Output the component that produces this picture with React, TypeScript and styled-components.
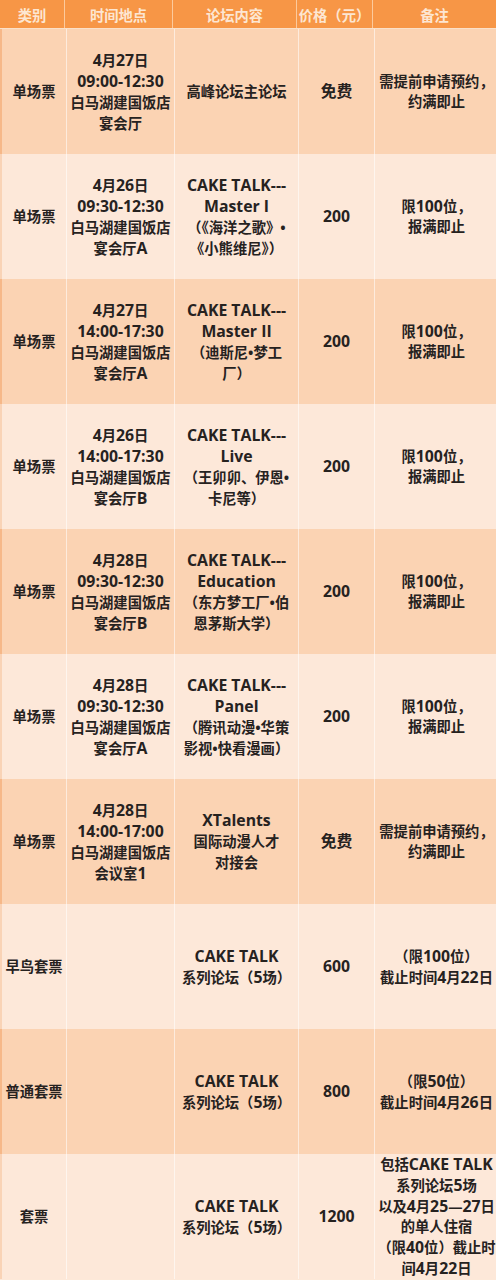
import React from "react";
import styled, { createGlobalStyle } from "styled-components";

interface Ticket {
    kind: string
    when: string[]
    topic: string[]
    price: string
    note: string[]
}

const tickets: Ticket[] = [
    { kind: "单场票", when: ["4月27日", "09:00-12:30", "白马湖建国饭店", "宴会厅"], topic: ["高峰论坛主论坛"], price: "免费", note: ["需提前申请预约，", "约满即止"] },
    { kind: "单场票", when: ["4月26日", "09:30-12:30", "白马湖建国饭店", "宴会厅A"], topic: ["CAKE TALK---", "Master I", "（《海洋之歌》•", "《小熊维尼》）"], price: "200", note: ["限100位，", "报满即止"] },
    { kind: "单场票", when: ["4月27日", "14:00-17:30", "白马湖建国饭店", "宴会厅A"], topic: ["CAKE TALK---", "Master II", "（迪斯尼•梦工", "厂）"], price: "200", note: ["限100位，", "报满即止"] },
    { kind: "单场票", when: ["4月26日", "14:00-17:30", "白马湖建国饭店", "宴会厅B"], topic: ["CAKE TALK---", "Live", "（王卯卯、伊恩•", "卡尼等）"], price: "200", note: ["限100位，", "报满即止"] },
    { kind: "单场票", when: ["4月28日", "09:30-12:30", "白马湖建国饭店", "宴会厅B"], topic: ["CAKE TALK---", "Education", "（东方梦工厂•伯", "恩茅斯大学）"], price: "200", note: ["限100位，", "报满即止"] },
    { kind: "单场票", when: ["4月28日", "09:30-12:30", "白马湖建国饭店", "宴会厅A"], topic: ["CAKE TALK---", "Panel", "（腾讯动漫•华策", "影视•快看漫画）"], price: "200", note: ["限100位，", "报满即止"] },
    { kind: "单场票", when: ["4月28日", "14:00-17:00", "白马湖建国饭店", "会议室1"], topic: ["XTalents", "国际动漫人才", "对接会"], price: "免费", note: ["需提前申请预约，", "约满即止"] },
    { kind: "早鸟套票", when: [], topic: ["CAKE TALK", "系列论坛（5场）"], price: "600", note: ["（限100位）", "截止时间4月22日"] },
    { kind: "普通套票", when: [], topic: ["CAKE TALK", "系列论坛（5场）"], price: "800", note: ["（限50位）", "截止时间4月26日"] },
    { kind: "套票", when: [], topic: ["CAKE TALK", "系列论坛（5场）"], price: "1200", note: ["包括CAKE TALK", "系列论坛5场", "以及4月25—27日", "的单人住宿", "（限40位）截止时", "间4月22日"] },
]

const headers = ["类别", "时间地点", "论坛内容", "价格（元）", "备注"]

// latin runs sit a little larger than the chinese glyphs in the original
const Mixed = ({ text }: { text: string }) => (
    <>
        {text.split(/([\x20-\x7E]+)/).filter(Boolean).map((part, i) =>
            /^[\x20-\x7E]+$/.test(part) ? <Latin key={i}>{part}</Latin> : <React.Fragment key={i}>{part}</React.Fragment>
        )}
    </>
)

const Lines = ({ lines }: { lines: string[] }) => (
    <>
        {lines.map((l, i) => <Line key={i}><Mixed text={l} /></Line>)}
    </>
)

const App = () => {
    return (
        <>
        <GlobalStyle />
        <Table>
            <HeaderRow>
                {headers.map(h => <HeaderCell key={h}>{h}</HeaderCell>)}
            </HeaderRow>
            {tickets.map((t, i) => (
                <Row key={i} dark={i % 2 === 0}>
                    <Cell>{t.kind}</Cell>
                    <Cell><Lines lines={t.when} /></Cell>
                    <Cell><Lines lines={t.topic} /></Cell>
                    <Cell><Latin>{t.price}</Latin></Cell>
                    <Cell tight><Lines lines={t.note} /></Cell>
                </Row>
            ))}
        </Table>
        </>
    )
}

const GlobalStyle = createGlobalStyle`
    body {
        margin: 0;
        background: #fde9d9;
        font-family: "Open Sans", "Noto Sans CJK SC", sans-serif;
    }
`

const Table = styled.div`
    display: flex;
    flex-direction: column;
    width: 496px;
`

const columns = "65px 108px 124px 76px 123px"

const HeaderRow = styled.div`
    display: grid;
    grid-template-columns: ${columns};
    height: 29px;
    background-color: #f79646;
    border-bottom: 1px solid #fbe0c8;
    box-sizing: border-box;
`

const HeaderCell = styled.div`
    display: flex;
    align-items: center;
    justify-content: center;
    color: #fde6d2;
    font-size: 14.3px;
    font-weight: 700;
    white-space: nowrap;
    border-right: 1px solid rgba(255, 236, 215, 0.6);
    &:last-child {
        border-right: none;
    }
`

const Row = styled.div<{ dark: boolean }>`
    display: grid;
    grid-template-columns: ${columns};
    height: 125px;
    background-color: ${props => props.dark ? "#fbd3b3" : "#fde8d9"};
    border-left: 2px solid ${props => props.dark ? "#f6b889" : "#f9d3b6"};
    box-sizing: border-box;
`

const Cell = styled.div<{ tight?: boolean }>`
    display: flex;
    flex-direction: column;
    align-items: center;
    justify-content: center;
    text-align: center;
    color: #26221f;
    font-size: 14.3px;
    font-weight: 700;
    line-height: ${props => props.tight ? "20px" : "21px"};
    white-space: nowrap;
    overflow: visible;
    border-right: 1px solid rgba(255, 255, 255, 0.55);
    &:last-child {
        border-right: none;
    }
`

const Line = styled.span`
    display: block;
`

const Latin = styled.span`
    font-size: 15.8px;
`

export default App
